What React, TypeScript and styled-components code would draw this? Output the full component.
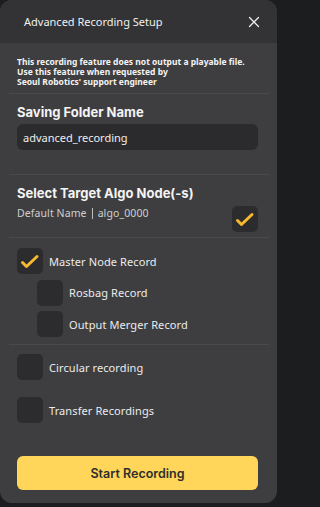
import React from 'react';
import styled, { createGlobalStyle } from 'styled-components';

const GlobalStyle = createGlobalStyle`
  html, body {
    margin: 0;
    padding: 0;
    background: #1c1d1f;
  }
  * {
    box-sizing: border-box;
  }
`;

interface Option {
  label: string;
  checked: boolean;
  nested?: boolean;
}

const nodeOptions: Option[] = [
  { label: 'Master Node Record', checked: true },
  { label: 'Rosbag Record', checked: false, nested: true },
  { label: 'Output Merger Record', checked: false, nested: true },
];

const CheckIcon = () => (
  <svg width="26" height="26" viewBox="0 0 26 26" fill="none">
    <path
      d="M5.5 14.5 L9.5 18.5 L20 8.5"
      stroke="#f6b92f"
      strokeWidth="3"
      strokeLinecap="round"
      strokeLinejoin="round"
    />
  </svg>
);

const CloseIcon = () => (
  <svg width="12" height="12" viewBox="0 0 12 12" fill="none">
    <path d="M1.5 1.5 L10.5 10.5 M10.5 1.5 L1.5 10.5" stroke="#f0f0f0" strokeWidth="1.3" strokeLinecap="round" />
  </svg>
);

const CheckBox = ({ checked }: { checked: boolean }) => (
  <Box>{checked && <CheckIcon />}</Box>
);

export default function App() {
  return (
    <>
      <GlobalStyle />
      <Modal>
        <Header>
          <HeaderTitle>Advanced Recording Setup</HeaderTitle>
          <CloseButton>
            <CloseIcon />
          </CloseButton>
        </Header>
        <Body>
          <Notice>
            This recording feature does not output a playable file.
            <br />
            Use this feature when requested by
            <br />
            Seoul Robotics' support engineer
          </Notice>
          <Divider $top={6} />
          <Section $top={10}>
            <Title>Saving Folder Name</Title>
            <Input defaultValue="advanced_recording" />
          </Section>
          <Divider $top={24} />
          <Section $top={10}>
            <Title>Select Target Algo Node(-s)</Title>
            <NodeRow>
              <NodeName>
                Default Name<Bar />algo_0000
              </NodeName>
              <CheckBox checked />
            </NodeRow>
          </Section>
          <Divider $top={5} />
          <Section $top={10}>
            <OptionList>
              {nodeOptions.map((o) => (
                <OptionRow key={o.label} $nested={o.nested}>
                  <CheckBox checked={o.checked} />
                  <OptionLabel>{o.label}</OptionLabel>
                </OptionRow>
              ))}
            </OptionList>
          </Section>
          <Divider $top={7} />
          <Section $top={9}>
            <OptionRow>
              <CheckBox checked={false} />
              <OptionLabel>Circular recording</OptionLabel>
            </OptionRow>
          </Section>
          <Section $top={17}>
            <OptionRow>
              <CheckBox checked={false} />
              <OptionLabel>Transfer Recordings</OptionLabel>
            </OptionRow>
          </Section>
          <Section $top={33}>
            <StartButton>Start Recording</StartButton>
          </Section>
        </Body>
      </Modal>
    </>
  );
}

const Modal = styled.div`
  width: 277px;
  height: 503px;
  background: #3e3e40;
  border-radius: 12px;
  overflow: hidden;
  display: flex;
  flex-direction: column;
  font-family: 'Noto Sans', 'Open Sans', sans-serif;
  color: #ececec;
`;

const Header = styled.div`
  height: 43px;
  flex: 0 0 auto;
  background: #333335;
  display: flex;
  align-items: center;
  justify-content: space-between;
  padding: 0 17px 0 24px;
`;

const HeaderTitle = styled.div`
  font-size: 11px;
  color: #f0f0f0;
`;

const CloseButton = styled.div`
  width: 12px;
  height: 12px;
  display: flex;
`;

const Body = styled.div`
  display: flex;
  flex-direction: column;
`;

const Notice = styled.div`
  margin-top: 14px;
  padding: 0 17px;
  font-size: 8.5px;
  line-height: 10px;
  font-weight: 700;
  letter-spacing: 0;
  color: #f4f4f4;
`;

const Divider = styled.div<{ $top: number }>`
  margin: ${({ $top }) => $top}px 8px 0 9px;
  height: 1px;
  background: #4a4a4c;
`;

const Section = styled.div<{ $top: number }>`
  margin-top: ${({ $top }) => $top}px;
  padding: 0 19px 0 17px;
`;

const Title = styled.div`
  font-family: Inter, 'Noto Sans', sans-serif;
  font-size: 13px;
  line-height: 16px;
  font-weight: 700;
  color: #f4f4f4;
`;

const Input = styled.input`
  margin-top: 4px;
  width: 100%;
  height: 26px;
  border: none;
  outline: none;
  border-radius: 6px;
  background: #2b2b2d;
  padding: 0 6px;
  font-family: 'Noto Sans', sans-serif;
  font-size: 11px;
  color: #eeeeee;
`;

const NodeRow = styled.div`
  margin-top: 5px;
  display: flex;
  align-items: flex-start;
  justify-content: space-between;
`;

const NodeName = styled.div`
  font-size: 10.5px;
  line-height: 14px;
  color: #cfcfcf;
  display: flex;
  align-items: center;
  letter-spacing: 0.1px;
`;

const Bar = styled.span`
  display: inline-block;
  width: 1px;
  height: 11px;
  background: #bdbdbd;
  margin: 0 5px;
`;

const Box = styled.div`
  width: 26px;
  height: 26px;
  flex: 0 0 26px;
  border-radius: 5px;
  background: #2c2c2e;
  display: flex;
  align-items: center;
  justify-content: center;
`;

const OptionList = styled.div`
  display: flex;
  flex-direction: column;
  gap: 5.5px;
`;

const OptionRow = styled.div<{ $nested?: boolean }>`
  display: flex;
  align-items: center;
  gap: 6px;
  padding-left: ${({ $nested }) => ($nested ? 20 : 0)}px;
`;

const OptionLabel = styled.span`
  font-size: 11px;
  color: #ececec;
  letter-spacing: 0.1px;
`;

const StartButton = styled.button`
  width: 100%;
  height: 34px;
  border: none;
  border-radius: 6px;
  background: #ffd659;
  color: #2e2e2e;
  font-family: Inter, 'Noto Sans', sans-serif;
  font-size: 12.5px;
  font-weight: 600;
  cursor: pointer;
`;
